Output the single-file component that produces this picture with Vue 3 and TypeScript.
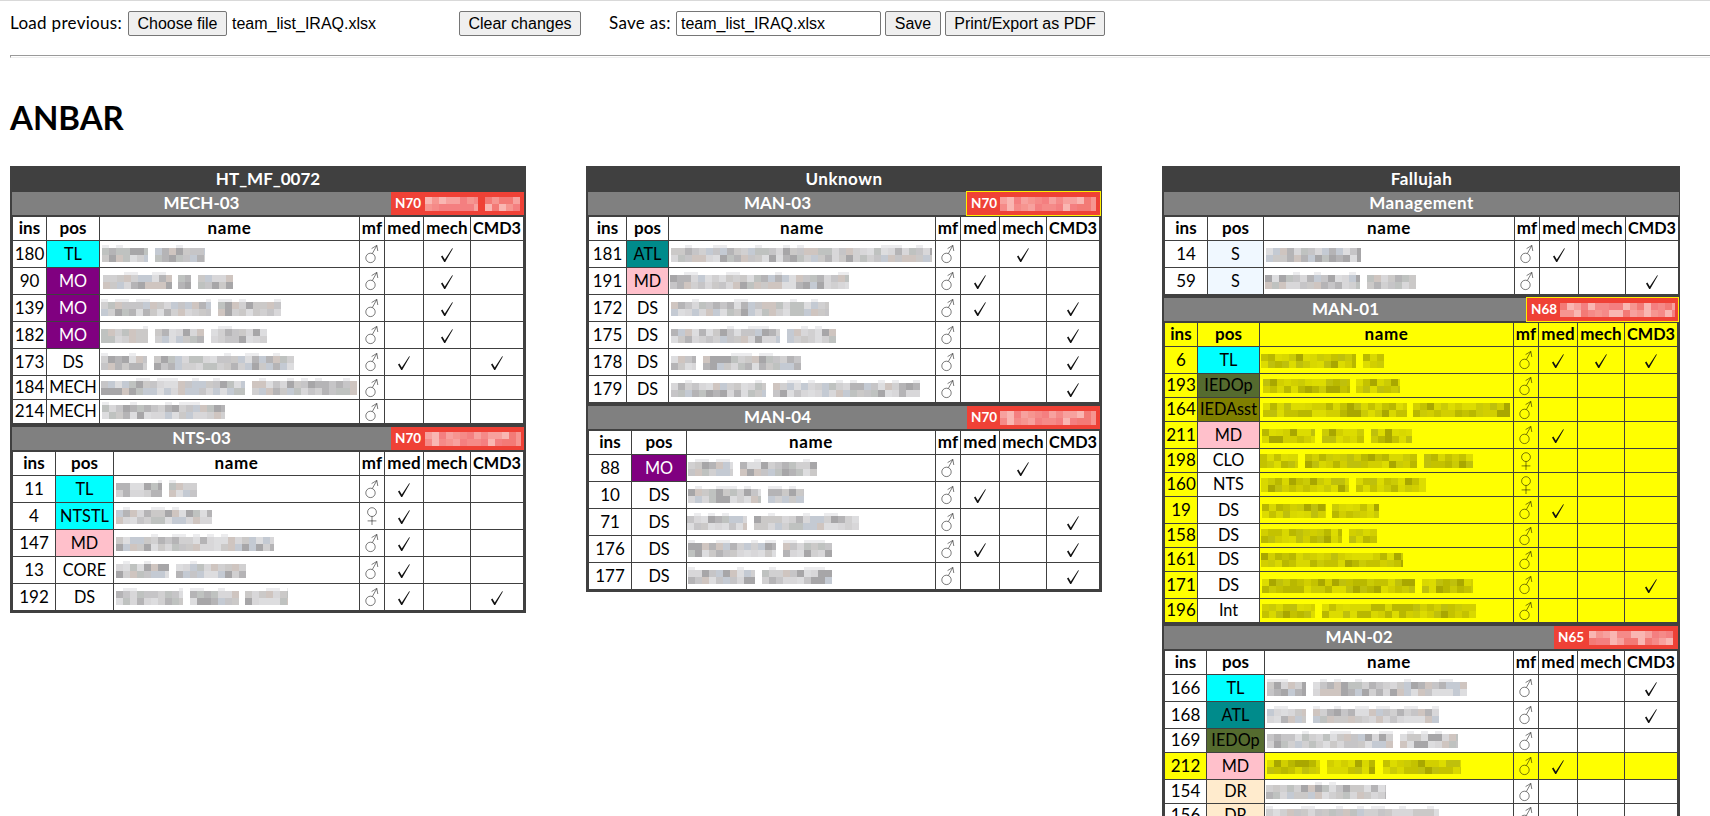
<script setup lang="ts">
import { ref } from 'vue'

type Span = [number, number]
type Check = 'med' | 'mech' | 'cmd3'
interface Member {
  ins: number
  pos: string
  female: boolean
  checks: Check[]
  name: Span[]
  highlight: boolean
}
interface Badge {
  code: string
  width: number
  mask: Span[]
  outlined?: boolean
}
interface Team {
  title: string
  cols: string
  badge?: Badge
  highlight?: boolean
  members: Member[]
}
interface Site {
  title: string
  cls: string
  teams: Team[]
}

const fileName = ref('team_list_IRAQ.xlsx')
const checkColumns: Check[] = ['med', 'mech', 'cmd3']
const flags: Record<string, Check> = { d: 'med', h: 'mech', c: 'cmd3' }

// opts: f = female, y = highlighted row, d / h / c = med / mech / CMD3 ticks
function m(ins: number, pos: string, opts: string, ...name: Span[]): Member {
  return {
    ins,
    pos,
    female: opts.includes('f'),
    highlight: opts.includes('y'),
    checks: Object.keys(flags).filter((k) => opts.includes(k)).map((k) => flags[k]),
    name,
  }
}

const sites: Site[] = [
  {
    title: 'HT_MF_0072',
    cls: 'site-a',
    teams: [
      {
        title: 'MECH-03',
        cols: 'c-mech03',
        badge: { code: 'N70', width: 133, mask: [[34, 87], [94, 129]] },
        members: [
          m(180, 'TL', 'h', [2, 48], [55, 105]),
          m(90, 'MO', 'h', [3, 72], [78, 91], [98, 133]),
          m(139, 'MO', 'h', [1, 111], [118, 181]),
          m(182, 'MO', 'h', [1, 48], [55, 104], [111, 167]),
          m(173, 'DS', 'dc', [1, 47], [54, 194]),
          m(184, 'MECH', '', [1, 145], [152, 257]),
          m(214, 'MECH', '', [2, 125]),
        ],
      },
      {
        title: 'NTS-03',
        cols: 'c-nts03',
        badge: { code: 'N70', width: 133, mask: [[34, 130]] },
        members: [
          m(11, 'TL', 'd', [2, 48], [55, 83]),
          m(4, 'NTSTL', 'df', [2, 98]),
          m(147, 'MD', 'd', [2, 160]),
          m(13, 'CORE', 'd', [2, 55], [62, 132]),
          m(192, 'DS', 'dc', [2, 69], [76, 125], [131, 174]),
        ],
      },
    ],
  },
  {
    title: 'Unknown',
    cls: 'site-b',
    teams: [
      {
        title: 'MAN-03',
        cols: 'c-man03',
        badge: { code: 'N70', width: 133, mask: [[33, 129]], outlined: true },
        members: [
          m(181, 'ATL', 'h', [2, 263]),
          m(191, 'MD', 'd', [1, 180]),
          m(172, 'DS', 'dc', [2, 160]),
          m(175, 'DS', 'c', [2, 111], [118, 167]),
          m(178, 'DS', 'c', [2, 27], [34, 132]),
          m(179, 'DS', 'c', [2, 97], [104, 251]),
        ],
      },
      {
        title: 'MAN-04',
        cols: 'c-man04',
        badge: { code: 'N70', width: 133, mask: [[33, 129]] },
        members: [
          m(88, 'MO', 'h', [1, 46], [53, 130]),
          m(10, 'DS', 'd', [1, 74], [81, 117]),
          m(71, 'DS', 'c', [0, 60], [67, 172]),
          m(176, 'DS', 'dc', [1, 89], [96, 145]),
          m(177, 'DS', 'c', [1, 68], [75, 145]),
        ],
      },
    ],
  },
  {
    title: 'Fallujah',
    cls: 'site-c',
    teams: [
      {
        title: 'Management',
        cols: 'c-mgmt',
        members: [
          m(14, 'S', 'd', [2, 97]),
          m(59, 'S', 'c', [1, 96], [103, 152]),
        ],
      },
      {
        title: 'MAN-01',
        cols: 'c-man01',
        badge: { code: 'N68', width: 151, mask: [[33, 148]], outlined: true },
        highlight: true,
        members: [
          m(6, 'TL', 'dhc', [1, 96], [103, 124]),
          m(193, 'IEDOp', '', [3, 90], [96, 140]),
          m(164, 'IEDAsst', '', [3, 147], [153, 250]),
          m(211, 'MD', 'd', [2, 55], [62, 104], [111, 152]),
          m(198, 'CLO', 'f', [0, 38], [45, 157], [164, 213]),
          m(160, 'NTS', 'f', [1, 89], [96, 166]),
          m(19, 'DS', 'd', [2, 66], [72, 119]),
          m(158, 'DS', '', [1, 82], [89, 117]),
          m(161, 'DS', '', [1, 143]),
          m(171, 'DS', 'c', [2, 155], [162, 213]),
          m(196, 'Int', '', [2, 55], [62, 216]),
        ],
      },
      {
        title: 'MAN-02',
        cols: 'c-man02',
        badge: { code: 'N65', width: 124, mask: [[35, 119]] },
        members: [
          m(166, 'TL', 'c', [2, 41], [48, 202]),
          m(168, 'ATL', 'c', [2, 41], [48, 174]),
          m(169, 'IEDOp', '', [2, 128], [135, 193]),
          m(212, 'MD', 'dy', [2, 55], [62, 110], [118, 196]),
          m(154, 'DR', '', [1, 121]),
          m(156, 'DR', '', [1, 174]),
        ],
      },
    ],
  },
]

const palettes = {
  grey: ['#c6c5c7', '#d1d0d1', '#b5b4b6', '#d8d7d9', '#cbc9c8', '#c4cad3', '#cfc5c0', '#a7a6a8', '#dddddf', '#bfc2c0'],
  yellow: ['#cbcb05', '#b9b800', '#d9d800', '#c4c200', '#dddc00', '#a9a700', '#d2cf00', '#bfc00c'],
  red: ['#f58a88', '#f7a19e', '#f37a76', '#f9b6b2', '#f69590', '#f47f80'],
}

interface Block { x: number; y: number; w: number; h: number; fill: string }

// Censored text drawn as 7px mosaic blocks, stable for a given seed
function mosaic(seed: number, spans: Span[], tone: keyof typeof palettes): Block[] {
  const colours = palettes[tone]
  let s = seed * 7919 + 13
  const next = () => {
    s = (s * 1103515245 + 12345) % 2147483648
    return Math.floor(s / 65536) / 32768
  }
  const out: Block[] = []
  for (const [a, b] of spans) {
    for (let x = a; x < b; x += 7) {
      const w = Math.min(7, b - x)
      if (tone === 'grey' && next() < 0.3) out.push({ x, y: 0, w, h: 3, fill: '#ececee' })
      for (let r = 0; r < 2; r++) {
        out.push({ x, y: 3 + r * 7, w, h: 7, fill: colours[Math.floor(next() * colours.length)] })
      }
    }
  }
  return out
}

// Titles with lowercase letters are set slightly wider than all-caps ones
const isMixed = (t: string) => /[a-z]/.test(t)
</script>

<template>
  <div class="page">
    <div class="toolbar">
      <label class="load">Load previous:</label>
      <button class="choose">Choose file</button>
      <span class="filename">{{ fileName }}</span>
      <button class="clear">Clear changes</button>
      <label class="saveas">Save as:</label>
      <input v-model="fileName" class="saveinput" type="text" />
      <button class="save">Save</button>
      <button class="print">Print/Export as PDF</button>
    </div>
    <div class="rule"></div>
    <h1>ANBAR</h1>
    <div class="sites">
      <section v-for="site in sites" :key="site.title" class="site" :class="site.cls">
        <div class="site-title" :class="{ mixed: isMixed(site.title) }">{{ site.title }}</div>
        <div v-for="team in site.teams" :key="team.title" class="team" :class="[team.cols, { hl: team.highlight }]">
          <div class="team-head">
            <div class="team-title" :class="{ mixed: isMixed(team.title) }">{{ team.title }}</div>
            <div v-if="team.badge" class="badge" :class="{ outlined: team.badge.outlined }" :style="{ width: team.badge.width + 'px' }">
              <span>{{ team.badge.code }}</span>
              <svg class="badge-mask" :width="team.badge.width" height="17" shape-rendering="crispEdges">
                <rect v-for="(b, i) in mosaic(team.title.length + team.badge.width, team.badge.mask, 'red')" :key="i" :x="b.x" :y="b.y" :width="b.w" :height="b.h" :fill="b.fill" />
              </svg>
            </div>
          </div>
          <div class="row head">
            <div>ins</div>
            <div>pos</div>
            <div class="wide">name</div>
            <div>mf</div>
            <div>med</div>
            <div>mech</div>
            <div class="caps">CMD3</div>
          </div>
          <div v-for="p in team.members" :key="p.ins" class="row" :class="{ tall: p.checks.length, hl: p.highlight }">
            <div class="ins">{{ p.ins }}</div>
            <div class="pos" :class="'pos-' + p.pos.toLowerCase()">{{ p.pos }}</div>
            <div class="name">
              <svg width="264" height="17" shape-rendering="crispEdges">
                <rect v-for="(b, i) in mosaic(p.ins, p.name, team.highlight || p.highlight ? 'yellow' : 'grey')" :key="i" :x="b.x" :y="b.y" :width="b.w" :height="b.h" :fill="b.fill" />
              </svg>
            </div>
            <div>
              <svg class="sex" width="16" height="20" viewBox="0 0 16 20">
                <path v-if="p.female" d="M8 1.7a4.4 4.4 0 1 0 0 8.8a4.4 4.4 0 1 0 0-8.8M8 10.5V19M3.6 14.9h8.8" />
                <path v-else d="M6.5 9.2a4.7 4.7 0 1 0 0 9.4a4.7 4.7 0 1 0 0-9.4M8.4 9.4L12.8 1.6M7.6 4.6L12.8 1.4L13.8 7" />
              </svg>
            </div>
            <div v-for="c in checkColumns" :key="c">
              <svg v-if="p.checks.includes(c)" class="tick" width="14" height="16" viewBox="0 0 14 16">
                <path d="M1 9.4L2.4 8.6L4.8 12.6L12.2 1.2L12.9 1.5L5.2 15L4.2 15Z" />
              </svg>
            </div>
          </div>
        </div>
      </section>
    </div>
  </div>
</template>

<style>
html,
body {
  margin: 0;
  background: #fff;
  overflow: hidden;
}
</style>

<style scoped>
.page {
  box-sizing: border-box;
  height: 816px;
  overflow: hidden;
  padding-left: 10px;
  border-top: 1px solid #d9d9d9;
  font-family: Lato, 'Liberation Sans', sans-serif;
  font-size: 17px;
  color: #000;
}
.toolbar {
  display: flex;
  align-items: center;
  height: 25px;
  padding-top: 10px;
}
.toolbar > * {
  box-sizing: border-box;
  flex: none;
  white-space: nowrap;
}
.toolbar button,
.toolbar input {
  height: 25px;
  margin: 0;
  border: 1px solid #767676;
  border-radius: 2px;
  background: #efefef;
  color: #000;
  font: 16px 'Liberation Sans', Arial, sans-serif;
  padding: 0;
  text-align: center;
}
.load,
.saveas {
  line-height: 20px;
  padding-bottom: 1px;
}
.load { width: 118px; letter-spacing: 0.3px; }
.toolbar .choose { width: 99px; }
.filename {
  width: 232px;
  padding-left: 5px;
  font: 16px 'Liberation Sans', Arial, sans-serif;
}
.toolbar .clear { width: 122px; }
.saveas { width: 95px; padding-left: 28px; letter-spacing: 0.3px; }
.toolbar .saveinput {
  width: 205px;
  padding: 0 4px;
  background: #fff;
  text-align: left;
}
.toolbar .save { width: 56px; margin-left: 4px; }
.toolbar .print { width: 160px; margin-left: 4px; }
.rule {
  height: 1px;
  margin-top: 19px;
  border: 1px solid #9a9a9a;
  border-bottom-color: #eee;
  border-right: 0;
}
h1 {
  margin: 39px 0 0;
  height: 41px;
  font-size: 33px;
  line-height: 41px;
  font-weight: 700;
}
.sites {
  display: flex;
  align-items: flex-start;
  gap: 60px;
  margin-top: 28px;
}
.site {
  box-sizing: border-box;
  flex: none;
  width: 516px;
  padding: 0 2px 2px;
  background: #404040;
}
.site-c { width: 518px; padding-right: 1px; }
.site-title {
  height: 26px;
  line-height: 25px;
  text-align: center;
  color: #fff;
  font-weight: 700;
}
.mixed { letter-spacing: 0.5px; }
.team + .team { margin-top: 3px; }
.team-head {
  display: flex;
  height: 23px;
  margin-bottom: 2px;
  background: #808080;
  color: #fff;
  font-weight: 700;
  line-height: 22px;
}
.team-title { flex: 1; text-align: center; }
.site-c .team + .team .team-head { margin-right: 1px; }
.badge {
  position: relative;
  box-sizing: border-box;
  flex: none;
  padding-left: 4px;
  background: #ef4136;
  font-size: 13.5px;
}
.badge.outlined { box-shadow: 0 0 0 1px #ffef00; }
.badge-mask {
  position: absolute;
  left: 0;
  top: 2px;
}
.row {
  display: grid;
  height: 24px;
  margin-left: 1px;
}
.row.tall { height: 27px; }
.c-mech03 .row { grid-template-columns: 34px 53px 260px 25px 39px 47px 52px; }
.c-nts03 .row { grid-template-columns: 43px 58px 246px 25px 39px 47px 52px; }
.c-man03 .row { grid-template-columns: 38px 42px 267px 25px 39px 47px 52px; }
.c-man04 .row { grid-template-columns: 43px 55px 249px 25px 39px 47px 52px; }
.c-mgmt .row { grid-template-columns: 43px 56px 251px 25px 39px 47px 52px; }
.c-man01 .row { grid-template-columns: 33px 62px 254px 25px 39px 47px 52px; }
.c-man02 .row { grid-template-columns: 42px 58px 249px 25px 39px 47px 52px; }
.row > div {
  display: flex;
  align-items: center;
  justify-content: center;
  min-width: 0;
  overflow: hidden;
  white-space: nowrap;
  line-height: 20px;
  background: #fff;
  border-right: 1px solid #404040;
  border-bottom: 1px solid #404040;
}
.row > div:last-child { border-right: 0; }
.row > .ins,
.row > .pos,
.head > div { padding-bottom: 1px; }
.row > .pos { font-size: 16.3px; }
.head > div {
  font-weight: 700;
  letter-spacing: 0.1px;
}
.head > .wide { letter-spacing: 0.6px; }
.head > .caps { font-size: 16.3px; letter-spacing: 0; }
.team.hl .row > div,
.row.hl > div { background: #ff0; }
.row > div.name { justify-content: flex-start; }
.name svg {
  flex: none;
  margin-top: -2px;
}
.row > div.pos { background: #fff; }
.row > div.pos-tl,
.row > div.pos-ntstl { background: #0ff; }
.row > div.pos-atl { background: #008b8b; }
.row > div.pos-mo { background: #800080; color: #fff; }
.row > div.pos-md { background: #ffc0cb; }
.row > div.pos-s { background: #f0f8ff; }
.row > div.pos-iedop { background: #556b2f; }
.row > div.pos-iedasst { background: #808000; }
.row > div.pos-dr { background: #ffebcd; }
.team.hl .row > div.pos-tl { background: #0ff; }
.team.hl .row > div.pos-iedop { background: #556b2f; }
.team.hl .row > div.pos-iedasst { background: #808000; }
.team.hl .row > div.pos-md,
.row.hl > div.pos-md { background: #ffc0cb; }
.team.hl .row > div.pos-clo,
.team.hl .row > div.pos-nts,
.team.hl .row > div.pos-ds,
.team.hl .row > div.pos-int { background: #fff; }
.sex {
  fill: none;
  stroke: #000;
  stroke-opacity: 0.65;
  stroke-width: 0.8;
}
.tick {
  margin-top: 1px;
  fill: #111;
}
</style>
